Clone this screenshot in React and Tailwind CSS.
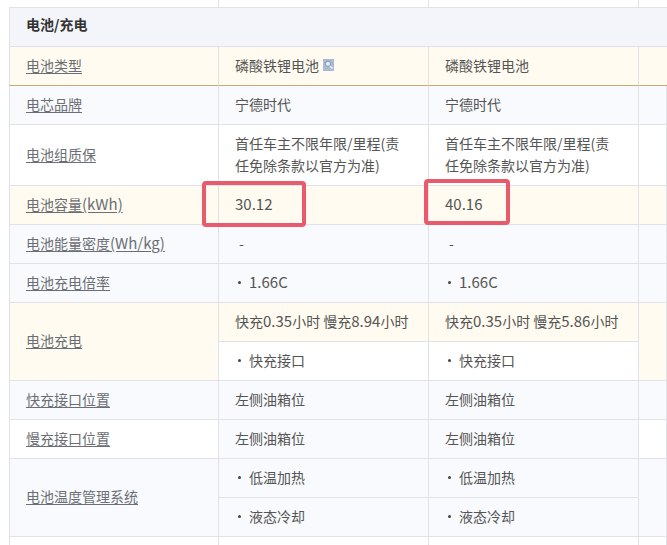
import React from "react";

const FONT = "font-['Microsoft_YaHei','Noto_Sans_CJK_SC','Noto_Sans',sans-serif]";
const LINE = "border-b border-r border-[#e0e2e6]";

// 单元格通用
const Cell = ({ bg = "bg-white", children, rowSpan, h = "h-[39px]" }) => (
  <td rowSpan={rowSpan} className={`${LINE} ${bg} ${h} pl-4 pr-5 pt-0 pb-[2px] text-[14px] leading-[22px] text-[#555] align-middle`}>
    {children}
  </td>
);

const Label = ({ bg = "bg-white", children, rowSpan, h = "h-[39px]" }) => (
  <td rowSpan={rowSpan} className={`${LINE} border-l ${bg} ${h} pl-4 pr-0 pt-0 pb-[2px] text-[14px] text-[#6b6f75] align-middle`}>
    <span className="underline underline-offset-2">{children}</span>
  </td>
);

const Num = ({ children }) => <span className="text-[15px]">{children}</span>;

const Bullet = ({ children }) => (
  <span className="flex items-center">
    <span className="w-[3px] h-[3px] rounded-full bg-[#444] ml-[3px] mr-[8px]" />
    {children}
  </span>
);

const SearchIcon = () => (
  <svg className="inline-block ml-[4px] align-[0px]" width="11" height="12" viewBox="0 0 11 12">
    <rect width="11" height="12" fill="#a9bbd3" />
    <circle cx="5" cy="4.8" r="2.6" fill="#e6edf5" stroke="#7d95b6" strokeWidth="1" />
    <path d="M7 7 L9.6 9.6" stroke="#f4f7fb" strokeWidth="1.4" />
  </svg>
);

const YELLOW = "bg-[#fffbf0]";
const ALT = "bg-[#f8fafd]";
const TYPE_CELL = "h-[39px] border-r border-b border-r-[#e0e2e6] border-b-[#c9a877] pl-4 pt-0 pb-[2px] text-[14px] text-[#555]";

const App = () => {
  return (
    <div className={`relative w-[667px] h-[545px] overflow-hidden bg-white ${FONT}`}>
      <table className="ml-[9px] w-[658px] table-fixed border-separate border-spacing-0">
        <colgroup>
          <col className="w-[210px]" />
          <col className="w-[210px]" />
          <col className="w-[210px]" />
          <col className="w-[28px]" />
        </colgroup>
        <tbody>
          <tr>
            <td className="h-[8px] border-b border-r border-[#e0e2e6] p-0" />
            <td className="h-[8px] border-b border-r border-[#e0e2e6] p-0" />
            <td className="h-[8px] border-b border-r border-[#e0e2e6] p-0" />
            <td className="h-[8px] border-b border-[#e0e2e6] p-0" />
          </tr>
          <tr>
            <td colSpan={4} className="h-[39px] border-l border-b border-[#e0e2e6] bg-[#f3f5fa] pl-4 pt-0 pb-[5px] text-[14px] font-bold text-[#333]">
              电池/充电
            </td>
          </tr>
          <tr>
            <td className={`${TYPE_CELL} border-l border-l-[#e0e2e6] ${YELLOW}`}>
              <span className="underline underline-offset-2 text-[#6b6f75]">电池类型</span>
            </td>
            <td className={`${TYPE_CELL} ${YELLOW}`}>
              磷酸铁锂电池<SearchIcon />
            </td>
            <td className={`${TYPE_CELL} ${YELLOW}`}>磷酸铁锂电池</td>
            <td className={`h-[39px] border-b border-b-[#c9a877] ${YELLOW} p-0`} />
          </tr>
          <tr>
            <Label bg={ALT}>电芯品牌</Label>
            <Cell bg={ALT}>宁德时代</Cell>
            <Cell bg={ALT}>宁德时代</Cell>
            <Cell bg={ALT} />
          </tr>
          <tr>
            <Label h="h-[61px]">电池组质保</Label>
            <Cell h="h-[61px]">首任车主不限年限/里程(责任免除条款以官方为准)</Cell>
            <Cell h="h-[61px]">首任车主不限年限/里程(责任免除条款以官方为准)</Cell>
            <Cell h="h-[61px]" />
          </tr>
          <tr>
            <Label bg={YELLOW}>电池容量<Num>(kWh)</Num></Label>
            <Cell bg={YELLOW}><Num>30.12</Num></Cell>
            <Cell bg={YELLOW}><Num>40.16</Num></Cell>
            <Cell bg={YELLOW} />
          </tr>
          <tr>
            <Label bg={ALT}>电池能量密度<Num>(Wh/kg)</Num></Label>
            <Cell bg={ALT}><span className="ml-[4px]">-</span></Cell>
            <Cell bg={ALT}><span className="ml-[4px]">-</span></Cell>
            <Cell bg={ALT} />
          </tr>
          <tr>
            <Label bg={ALT}>电池充电倍率</Label>
            <Cell bg={ALT}><Bullet><Num>1.66C</Num></Bullet></Cell>
            <Cell bg={ALT}><Bullet><Num>1.66C</Num></Bullet></Cell>
            <Cell bg={ALT} />
          </tr>
          <tr>
            <Label bg={YELLOW} rowSpan={2}>电池充电</Label>
            <Cell bg={YELLOW}><span className="whitespace-nowrap">快充<Num>0.35</Num>小时 慢充<Num>8.94</Num>小时</span></Cell>
            <Cell bg={YELLOW}><span className="whitespace-nowrap">快充<Num>0.35</Num>小时 慢充<Num>5.86</Num>小时</span></Cell>
            <Cell bg={YELLOW} rowSpan={2} />
          </tr>
          <tr>
            <Cell><Bullet>快充接口</Bullet></Cell>
            <Cell><Bullet>快充接口</Bullet></Cell>
          </tr>
          <tr>
            <Label bg={ALT}>快充接口位置</Label>
            <Cell bg={ALT}>左侧油箱位</Cell>
            <Cell bg={ALT}>左侧油箱位</Cell>
            <Cell bg={ALT} />
          </tr>
          <tr>
            <Label>慢充接口位置</Label>
            <Cell bg={ALT}>左侧油箱位</Cell>
            <Cell bg={ALT}>左侧油箱位</Cell>
            <Cell />
          </tr>
          <tr>
            <Label bg={ALT} rowSpan={2}>电池温度管理系统</Label>
            <Cell bg={ALT}><Bullet>低温加热</Bullet></Cell>
            <Cell bg={ALT}><Bullet>低温加热</Bullet></Cell>
            <Cell bg={ALT} rowSpan={2} />
          </tr>
          <tr>
            <Cell bg={ALT}><Bullet>液态冷却</Bullet></Cell>
            <Cell bg={ALT}><Bullet>液态冷却</Bullet></Cell>
          </tr>
          <tr>
            <Label />
            <Cell />
            <Cell />
            <Cell />
          </tr>
        </tbody>
      </table>

      {/* 红色标注框 */}
      <div className="absolute left-[202px] top-[181px] w-[104px] h-[46px] rounded-[4px] border-[4px] border-[#e95a6c]" />
      <div className="absolute left-[424px] top-[179px] w-[86px] h-[46px] rounded-[4px] border-[4px] border-[#e95a6c]" />
    </div>
  );
};

export default App;
